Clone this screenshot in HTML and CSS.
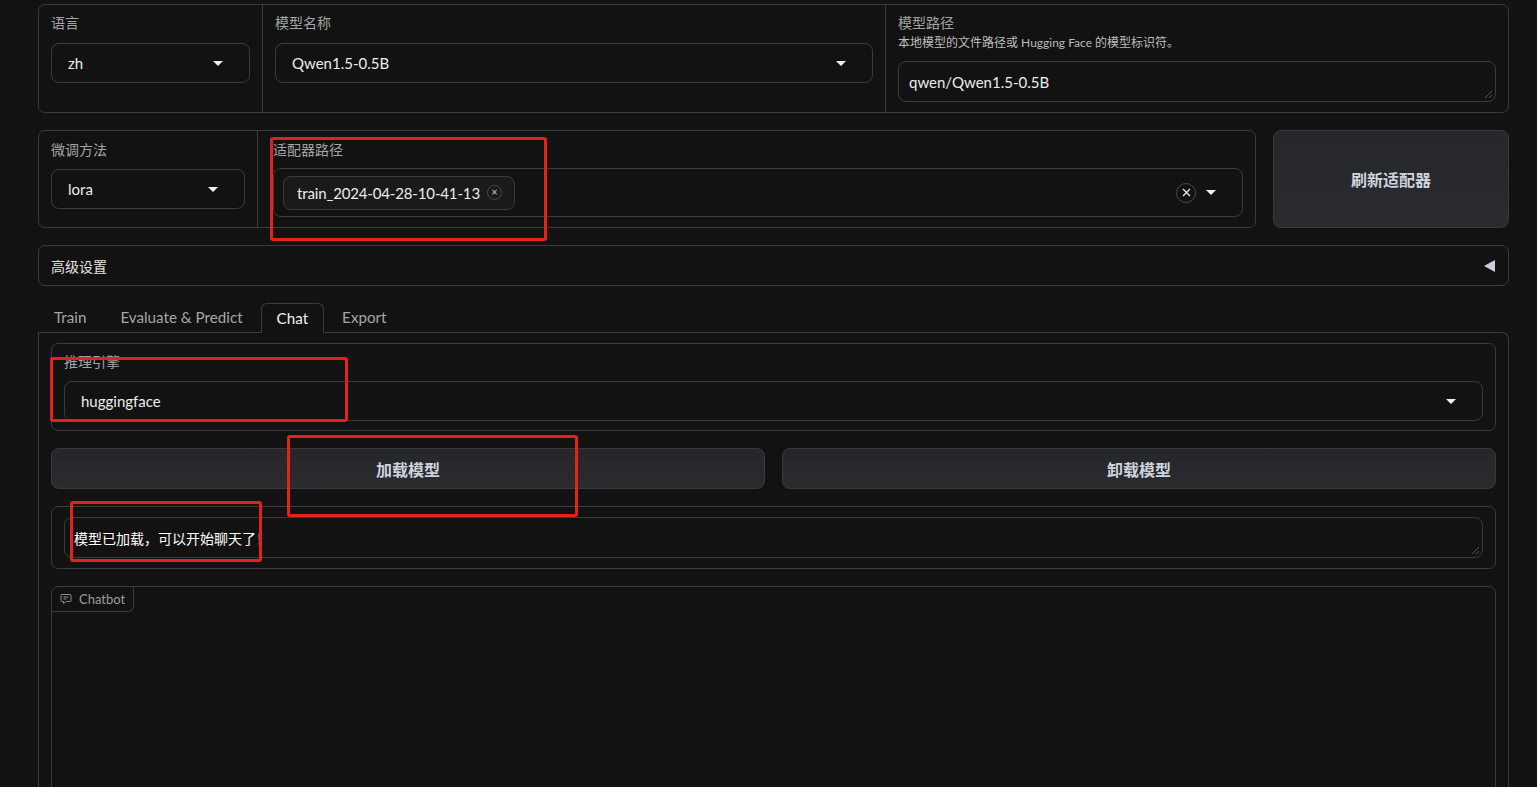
FILE: index.html
```html
<!DOCTYPE html>
<html lang="zh">
<head>
<meta charset="utf-8">
<title>LLaMA Board</title>
<link rel="stylesheet" href="styles.css">
</head>
<body>
<div class="page">
  <div class="block row-top">
    <div class="field">
      <div class="label">语言</div>
      <div class="select"><span>zh</span><span class="caret"></span></div>
    </div>
    <div class="field sep">
      <div class="label">模型名称</div>
      <div class="select"><span>Qwen1.5-0.5B</span><span class="caret"></span></div>
    </div>
    <div class="field sep">
      <div class="label tight">模型路径</div>
      <div class="info">本地模型的文件路径或 Hugging Face 的模型标识符。</div>
      <div class="textbox"><span>qwen/Qwen1.5-0.5B</span><span class="grip"></span></div>
    </div>
  </div>

  <div class="row-mid">
    <div class="block row-adapter">
      <div class="field f2">
        <div class="label l2">微调方法</div>
        <div class="select"><span>lora</span><span class="caret"></span></div>
      </div>
      <div class="field f2 sep wide">
        <div class="label l3">适配器路径</div>
        <div class="multi">
          <div class="chip"><span>train_2024-04-28-10-41-13</span><span class="chip-x">×</span></div>
          <div class="multi-ctrl"><span class="clear-x"><svg width="11" height="11" viewBox="0 0 11 11"><path d="M2 2l7 7M9 2l-7 7" stroke="#e6e6e6" stroke-width="1.4" fill="none"/></svg></span><span class="caret"></span></div>
        </div>
      </div>
    </div>
    <button class="btn refresh">刷新适配器</button>
  </div>

  <div class="block accordion">
    <span>高级设置</span>
    <span class="tri-left"></span>
  </div>

  <div class="tabs">
    <div class="tab-nav">
      <div class="tab">Train</div>
      <div class="tab">Evaluate &amp; Predict</div>
      <div class="tab active">Chat</div>
      <div class="tab">Export</div>
    </div>
    <div class="tab-panel">
      <div class="block engine">
        <div class="label l2">推理引擎</div>
        <div class="select"><span>huggingface</span><span class="caret"></span></div>
      </div>
      <div class="btn-row">
        <button class="btn">加载模型</button>
        <button class="btn">卸载模型</button>
      </div>
      <div class="block info-box">
        <div class="textbox status"><span>模型已加载，可以开始聊天了！</span><span class="grip"></span></div>
      </div>
      <div class="block chatbot">
        <div class="chat-label">
          <svg width="12" height="12" viewBox="0 0 12 12" fill="none" stroke="#8a8a8a" stroke-width="1"><path d="M2 1.5h8a1 1 0 0 1 1 1v5a1 1 0 0 1-1 1H6.5l-3 2v-2H2a1 1 0 0 1-1-1v-5a1 1 0 0 1 1-1z"/><path d="M3.5 4h5M3.5 6h3"/></svg>
          <span>Chatbot</span>
        </div>
      </div>
    </div>
  </div>
</div>

<div class="mark m1"></div>
<div class="mark m2"></div>
<div class="mark m3"></div>
<div class="mark m4"></div>
</body>
</html>
```

FILE: styles.css
```css
* { box-sizing: border-box; }
html, body { margin: 0; padding: 0; }
body {
  background: #121212;
  color: #e6e6e6;
  font-family: Lato, "Noto Sans CJK SC", sans-serif;
  width: 1537px;
  height: 787px;
  overflow: hidden;
  position: relative;
}
.page {
  width: 1471px;
  margin-left: 38px;
  padding-top: 4px;
  display: flex;
  flex-direction: column;
  gap: 17px;
}
.block {
  border: 1px solid #3b3b3b;
  border-radius: 7px;
  background: #121212;
}
.row-top {
  display: grid;
  grid-template-columns: 223px 623px 1fr;
  height: 109px;
}
.field { padding: 8px 12px 10px; }
.sep { border-left: 1px solid #3b3b3b; }
.label {
  font-size: 14px;
  line-height: 20px;
  color: #a4a4a4;
  margin-bottom: 10px;
}
.label.tight { margin-bottom: 2px; }
.info {
  font-size: 12px;
  line-height: 16px;
  color: #bdbdbd;
  margin-bottom: 10px;
}
.select {
  height: 40px;
  border: 1px solid #3b3b3b;
  border-radius: 8px;
  display: flex;
  align-items: center;
  justify-content: space-between;
  padding: 0 26px 0 16px;
  font-size: 15px;
  color: #ececec;
}
.caret {
  width: 0; height: 0;
  border-left: 5px solid transparent;
  border-right: 5px solid transparent;
  border-top: 5px solid #f0f0f0;
}
.textbox {
  height: 41px;
  border: 1px solid #3b3b3b;
  border-radius: 8px;
  display: flex;
  align-items: center;
  padding: 0 10px;
  font-size: 15px;
  color: #ececec;
  position: relative;
}
.grip {
  position: absolute;
  right: 3px; bottom: 3px;
  width: 7px; height: 7px;
  background: linear-gradient(135deg, transparent 45%, #555 45%, #555 55%, transparent 55%, transparent 75%, #555 75%, #555 85%, transparent 85%);
}

.row-mid { display: flex; gap: 17px; height: 98px; }
.row-adapter {
  width: 1218px;
  display: grid;
  grid-template-columns: 218px 1fr;
}
.f2 { padding-top: 9px; }
.label.l2 { margin-bottom: 9px; }
.label.l3 { margin-bottom: 8px; }
.wide { padding-left: 15px; padding-right: 12px; }
.multi {
  height: 49px;
  border: 1px solid #3b3b3b;
  border-radius: 8px;
  display: flex;
  align-items: center;
  justify-content: space-between;
  padding: 0 26px 0 9px;
}
.chip {
  height: 34px;
  border: 1px solid #3b3b3b;
  border-radius: 8px;
  background: #1a1a1a;
  display: flex;
  align-items: center;
  gap: 7px;
  padding: 0 12px 0 13px;
  font-size: 15px;
  letter-spacing: -0.15px;
  color: #ececec;
}
.chip-x {
  width: 15px; height: 15px;
  border: 1px solid #4a4a4a;
  border-radius: 50%;
  font-size: 11px;
  line-height: 12px;
  text-align: center;
  color: #cfcfcf;
  letter-spacing: 0;
}
.multi-ctrl { display: flex; align-items: center; gap: 10px; }
.clear-x {
  width: 20px; height: 20px;
  border: 1px solid #4a4a4a;
  border-radius: 50%;
  display: flex;
  align-items: center;
  justify-content: center;
}
.btn {
  border: 1px solid #3a3a3e;
  border-radius: 8px;
  background: linear-gradient(180deg, #26272b, #2a2b2f);
  color: #cfd3dc;
  font-family: Lato, "Noto Sans CJK SC", sans-serif;
  font-size: 16px;
  font-weight: 700;
  padding: 0;
}
.refresh { flex: 1; }

.accordion {
  height: 41px;
  display: flex;
  align-items: center;
  justify-content: space-between;
  padding: 0 13px 0 12px;
  font-size: 14px;
  color: #e2e2e2;
}
.tri-left {
  width: 0; height: 0;
  border-top: 6px solid transparent;
  border-bottom: 6px solid transparent;
  border-right: 11px solid #c8cde0;
}

.tabs { display: flex; flex-direction: column; }
.tab-nav { display: flex; gap: 2px; height: 29px; }
.tab {
  padding: 0 16px;
  font-size: 15.2px;
  line-height: 28px;
  color: #a6a6a6;
}
.tab.active {
  color: #f2f2f2;
  border: 1px solid #3b3b3b;
  border-bottom: none;
  border-radius: 6px 6px 0 0;
  background: #121212;
  height: 30px;
  position: relative;
  z-index: 1;
  padding: 0 15px;
}
.tab-panel {
  border: 1px solid #3b3b3b;
  border-radius: 0 7px 0 0;
  border-bottom: none;
  padding: 10px 12px;
  display: flex;
  flex-direction: column;
  gap: 17px;
}
.engine { height: 88px; padding: 8px 12px 10px; }
.btn-row { display: flex; gap: 17px; height: 41px; }
.btn-row .btn { flex: 1; }
.info-box { height: 63px; padding: 10px 12px; }
.status { padding-left: 9px; font-size: 14px; color: #ffffff; }
.chatbot { height: 260px; position: relative; }
.chat-label {
  display: inline-flex;
  align-items: center;
  gap: 7px;
  height: 25px;
  width: 82px;
  padding-left: 8px;
  border-right: 1px solid #3b3b3b;
  border-bottom: 1px solid #3b3b3b;
  border-radius: 6px 0 6px 0;
  font-size: 13px;
  color: #9c9c9c;
}

.mark {
  position: absolute;
  border: 3px solid #e3231b;
  border-radius: 3px;
  pointer-events: none;
}
.m1 { left: 270px; top: 137px; width: 277px; height: 104px; }
.m2 { left: 50px; top: 357px; width: 298px; height: 65px; }
.m3 { left: 287px; top: 435px; width: 291px; height: 82px; }
.m4 { left: 70px; top: 501px; width: 192px; height: 61px; }
```
